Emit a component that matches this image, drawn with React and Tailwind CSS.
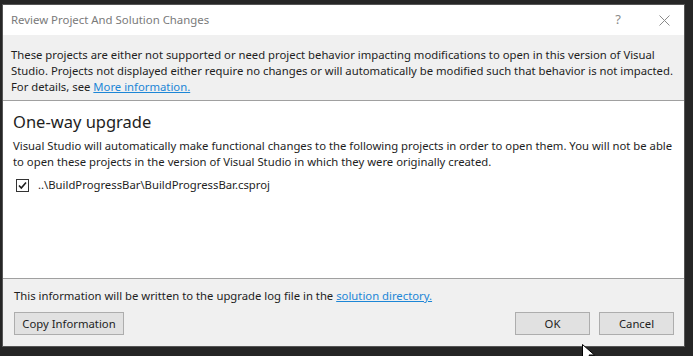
import React from 'react';

const font = { fontFamily: '"Noto Sans", "Open Sans", sans-serif' };

const DialogButton = ({ children, className = '' }) => (
  <button className={`h-[23px] bg-[#e1e1e1] border border-[#adadad] text-[11.3px] text-[#1e1e1e] leading-none ${className}`}>
    {children}
  </button>
);

const Checkbox = () => (
  <span className="w-[13px] h-[13px] border border-[#333] bg-white flex items-center justify-center">
    <svg width="11" height="11" viewBox="0 0 11 11">
      <path d="M2 5.5 L4.3 8 L9 2.5" fill="none" stroke="#1e1e1e" strokeWidth="1.6" />
    </svg>
  </span>
);

const Cursor = () => (
  <svg className="absolute left-[582px] top-[344px]" width="14" height="20" viewBox="0 0 14 20">
    <path d="M0.5 0.5 L0.5 16 L4.5 12 L7.5 18.5 L10 17.5 L7 11 L12.5 11 Z" fill="#fff" stroke="#000" strokeWidth="1" />
  </svg>
);

export default function App() {
  return (
    <div className="relative w-[693px] h-[356px] bg-[#262626] pt-[4px] pl-[2px] pr-[8px] pb-[9px] overflow-hidden" style={font}>
      <div className="h-full flex flex-col bg-white border border-[#555]">
        <div className="h-[30px] flex items-center justify-between pl-[8px] pr-[14px] bg-white shrink-0">
          <span className="text-[11.4px] text-[#7a7a7a]">Review Project And Solution Changes</span>
          <div className="flex items-center gap-[38px] text-[#8a8a8a]">
            <span className="text-[13px]">?</span>
            <svg width="11" height="11" viewBox="0 0 11 11">
              <path d="M0.5 0.5 L10.5 10.5 M10.5 0.5 L0.5 10.5" stroke="#8a8a8a" strokeWidth="1" />
            </svg>
          </div>
        </div>

        <div className="bg-[#f0f0f0] pt-[12px] pb-[5px] pl-[8px] pr-[8px] border-b border-[#a0a0a0] shrink-0">
          <p className="text-[11.3px] leading-[16px] text-[#1e1e1e] whitespace-nowrap">
            These projects are either not supported or need project behavior impacting modifications to open in this version of Visual
            <br />
            Studio. Projects not displayed either require no changes or will automatically be modified such that behavior is not impacted.
            <br />
            For details, see <a className="text-[#1c86d6] underline">More information.</a>
          </p>
        </div>

        <div className="flex-1 bg-white pt-[9px] pl-[10px] pr-[8px] border-b border-[#a0a0a0]">
          <h2 className="text-[16.5px] leading-[24px] text-[#1e1e1e]">One-way upgrade</h2>
          <p className="mt-[4px] text-[11.3px] leading-[16px] text-[#1e1e1e] whitespace-nowrap">
            Visual Studio will automatically make functional changes to the following projects in order to open them. You will not be able
            <br />
            to open these projects in the version of Visual Studio in which they were originally created.
          </p>
          <div className="mt-[7px] flex items-center gap-[9px] pl-[3px] text-[11.3px] leading-[16px] text-[#1e1e1e]">
            <Checkbox />
            <span>..\BuildProgressBar\BuildProgressBar.csproj</span>
          </div>
        </div>

        <div className="bg-[#f0f0f0] pt-[9px] pb-[11px] pl-[11px] pr-[10px] shrink-0">
          <p className="text-[11.3px] leading-[16px] text-[#1e1e1e]">
            This information will be written to the upgrade log file in the <a className="text-[#1c86d6] underline">solution directory.</a>
          </p>
          <div className="mt-[8px] flex items-center justify-between">
            <DialogButton className="w-[110px]">Copy Information</DialogButton>
            <div className="flex gap-[9px]">
              <DialogButton className="w-[75px]">OK</DialogButton>
              <DialogButton className="w-[75px]">Cancel</DialogButton>
            </div>
          </div>
        </div>
      </div>
      <Cursor />
    </div>
  );
}
